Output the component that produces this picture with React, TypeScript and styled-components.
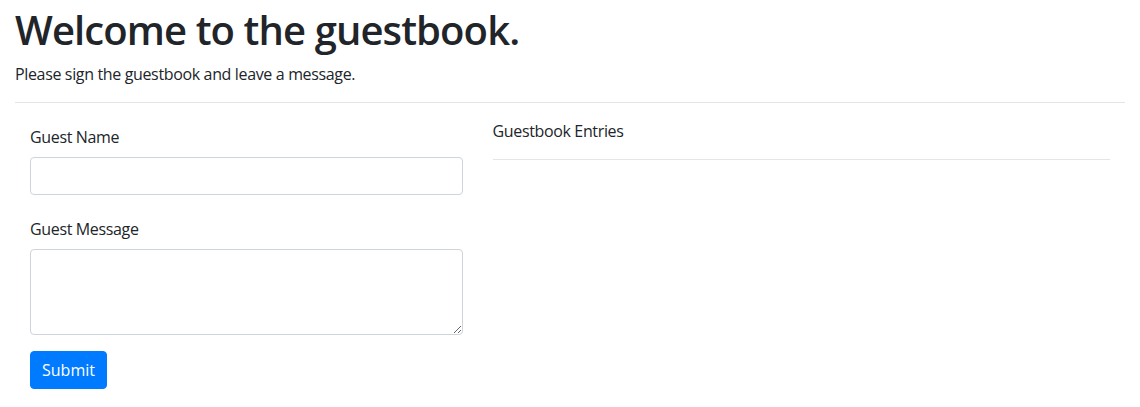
import React from "react";
import styled, { createGlobalStyle } from "styled-components";

const GlobalStyle = createGlobalStyle`
  *, *::before, *::after { box-sizing: border-box; }
  body {
    margin: 0;
    background: #fff;
    color: #212529;
    font-family: "Open Sans", "Noto Sans", sans-serif;
    font-size: 16px;
    line-height: 24px;
    letter-spacing: -0.35px;
  }
`;

const Page = styled.div`
  padding: 6px 15px 0;
`;

const Title = styled.h1`
  margin: 0 0 8px;
  font-size: 40px;
  line-height: 48px;
  font-weight: 600;
  letter-spacing: -0.9px;
`;

const Lead = styled.p`
  margin: 0 0 16px;
`;

const Divider = styled.hr<{ $gap?: number }>`
  margin: ${(p) => p.$gap ?? 0}px 0 16px;
  border: 0;
  border-top: 1px solid rgba(0, 0, 0, 0.1);
`;

const Row = styled.div`
  display: grid;
  grid-template-columns: 5fr 7fr;
`;

const Column = styled.div`
  padding: 0 15px;
  min-width: 0;
`;

const FormGroup = styled.div`
  padding-top: 6px;
  margin-bottom: 16px;
`;

const Label = styled.label`
  display: block;
  margin: 0 0 8px;
`;

const fieldBase = `
  display: block;
  width: 100%;
  padding: 6px 12px;
  font: inherit;
  color: #495057;
  background: #fff;
  border: 1px solid #ced4da;
  border-radius: 4px;
  outline: none;
`;

const TextInput = styled.input`
  ${fieldBase}
  height: 38px;
`;

const TextArea = styled.textarea`
  ${fieldBase}
  height: 86px;
  resize: vertical;
`;

const SubmitButton = styled.button`
  display: inline-block;
  padding: 6px 11px;
  font: inherit;
  line-height: 24px;
  color: #fff;
  background: #007bff;
  border: 1px solid #007bff;
  border-radius: 4px;
  cursor: pointer;
`;

const SectionTitle = styled.div`
  margin: 0;
`;

export default function App() {
  return (
    <Page>
      <GlobalStyle />
      <Title>Welcome to the guestbook.</Title>
      <Lead>Please sign the guestbook and leave a message.</Lead>
      <Divider />
      <Row>
        <Column>
          <FormGroup>
            <Label htmlFor="guest-name">Guest Name</Label>
            <TextInput id="guest-name" type="text" />
          </FormGroup>
          <FormGroup>
            <Label htmlFor="guest-message">Guest Message</Label>
            <TextArea id="guest-message" rows={3} />
          </FormGroup>
          <SubmitButton type="button">Submit</SubmitButton>
        </Column>
        <Column>
          <SectionTitle>Guestbook Entries</SectionTitle>
          <Divider $gap={16} />
        </Column>
      </Row>
    </Page>
  );
}
